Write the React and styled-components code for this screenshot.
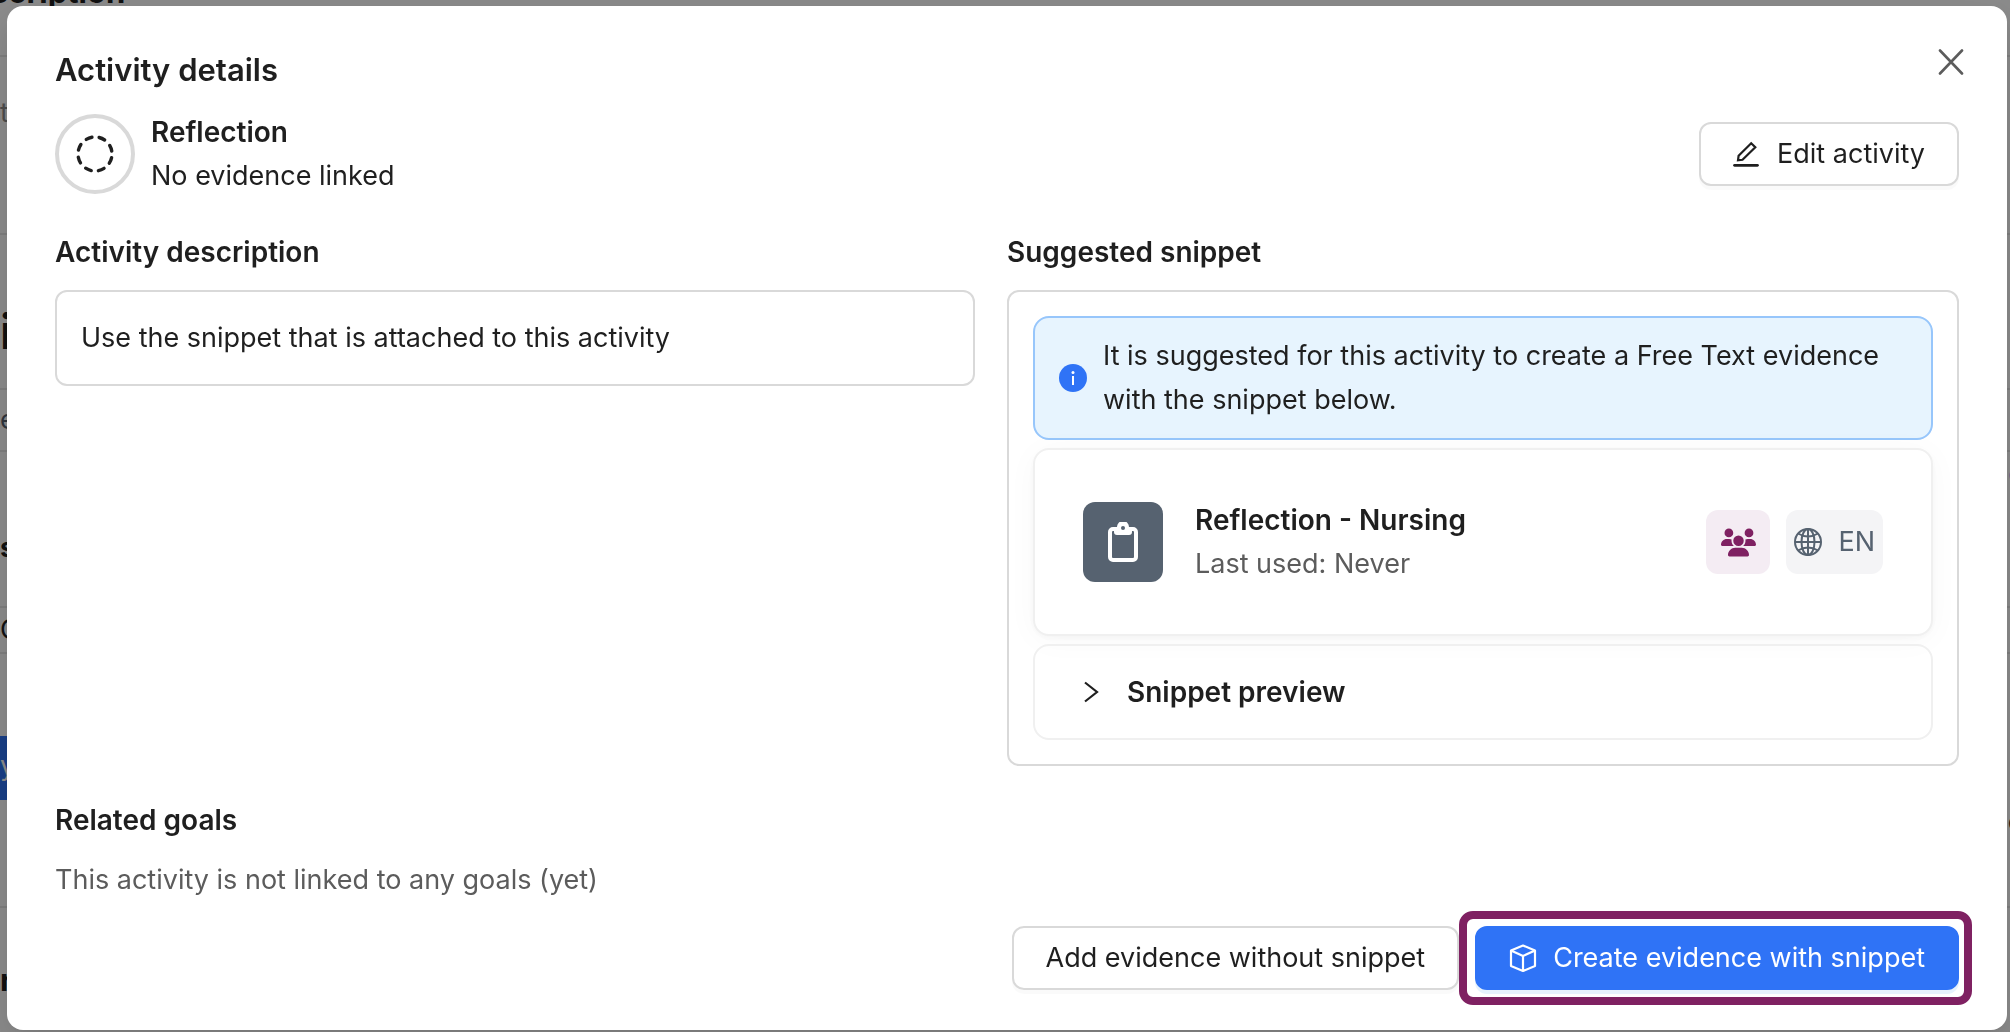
import React from 'react';
import styled, { createGlobalStyle } from 'styled-components';
import { FaUsers } from 'react-icons/fa6';

const GlobalStyle = createGlobalStyle`
  * {
    box-sizing: border-box;
  }

  body {
    margin: 0;
    background: #fff;
    color: #1f1f1f;
    font-family: Inter, 'Liberation Sans', sans-serif;
    font-size: 27px;
    line-height: 44px;
  }
`;

const Page = styled.div`
  position: fixed;
  inset: 0;
  overflow: hidden;
  background: #fff;
`;

const PageRow = styled.div`
  display: flex;
  align-items: flex-start;
  justify-content: space-between;
  height: ${(props) => props.$height}px;
  padding-top: ${(props) => props.$top || 0}px;
  border-bottom: 2px solid ${(props) => (props.$line ? '#e8e8e8' : 'transparent')};
  color: ${(props) => props.$color || '#1f1f1f'};
  font-size: ${(props) => props.$size || 27}px;
  font-weight: ${(props) => (props.$bold ? 700 : 400)};
`;

const PageTitle = styled.div`
  margin: -30px 0 0 -50px;
  font-size: 31px;
`;

const PageBlock = styled.div`
  width: 40px;
  height: 64px;
  line-height: 60px;
  color: #fff;
  background: #2f73f6;
`;

const PageEdge = styled.span`
  margin-right: -14px;
  color: ${(props) => props.$color};
  font-weight: 400;
`;

const Mask = styled.div`
  position: fixed;
  inset: 0;
  background: rgba(0, 0, 0, 0.45);
`;

const Modal = styled.div`
  position: relative;
  margin: 6px 3px 2px 7px;
  padding: 40px 48px;
  border-radius: 16px;
  background: #fff;
  box-shadow: 0 12px 32px 0 rgba(0, 0, 0, 0.08), 0 6px 12px -8px rgba(0, 0, 0, 0.12),
    0 18px 56px 16px rgba(0, 0, 0, 0.05);
`;

const ModalTitle = styled.h1`
  margin: 0 0 16px;
  font-size: 31px;
  font-weight: 600;
  line-height: 48px;
`;

const CloseButton = styled.button`
  position: absolute;
  top: 34px;
  right: 34px;
  display: flex;
  align-items: center;
  justify-content: center;
  width: 44px;
  height: 44px;
  padding: 0;
  border: 0;
  background: none;
  color: #5c5c5c;
`;

const Header = styled.div`
  display: flex;
  align-items: center;
  justify-content: space-between;
`;

const Summary = styled.div`
  display: flex;
  align-items: center;
  gap: 16px;
`;

const StatusRing = styled.div`
  display: flex;
  align-items: center;
  justify-content: center;
  width: 80px;
  height: 80px;
  border: 4px solid #d9d9d9;
  border-radius: 50%;
`;

const Name = styled.div`
  font-size: 28px;
  font-weight: 600;
`;

const Muted = styled.div`
  color: #5c5c5c;
`;

const Button = styled.button`
  position: relative;
  display: flex;
  align-items: center;
  gap: 16px;
  height: 64px;
  padding: 0 32px;
  border: 2px solid ${(props) => (props.$primary ? '#2f73f6' : '#d9d9d9')};
  border-radius: 12px;
  background: ${(props) => (props.$primary ? '#2f73f6' : '#fff')};
  color: ${(props) => (props.$primary ? '#fff' : '#1f1f1f')};
  box-shadow: 0 4px 0 ${(props) => (props.$primary ? '#e6f2fd' : 'rgba(0, 0, 0, 0.02)')};
  font: inherit;
`;

const Columns = styled.div`
  display: grid;
  grid-template-columns: 1fr 1fr;
  align-items: start;
  padding: 32px 0;
`;

const Column = styled.section`
  padding-right: ${(props) => (props.$gutter ? 32 : 0)}px;
`;

const Heading = styled.h2`
  margin: 0 0 16px;
  font-size: 28px;
  font-weight: 600;
  line-height: 44px;
`;

const Box = styled.div`
  display: flex;
  flex-direction: column;
  gap: 8px;
  padding: 24px;
  border: 2px solid #d9d9d9;
  border-radius: 12px;
`;

const Alert = styled.div`
  display: flex;
  align-items: center;
  gap: 16px;
  padding: 16px 24px;
  border: 2px solid #97c6fb;
  border-radius: 16px;
  background: #e7f4fe;

  svg {
    flex: none;
  }
`;

const SnippetCard = styled.div`
  display: flex;
  align-items: center;
  gap: 32px;
  padding: 48px;
  border: 2px solid #f0f0f0;
  border-radius: 16px;
  background: #fff;
  box-shadow: 0 2px 4px 0 rgba(0, 0, 0, 0.02), 0 2px 12px -2px rgba(0, 0, 0, 0.02),
    0 4px 32px 0 rgba(0, 0, 0, 0.03);
`;

const SnippetIcon = styled.div`
  display: flex;
  align-items: center;
  justify-content: center;
  width: 80px;
  height: 80px;
  border-radius: 12px;
  background: #566270;
`;

const Tags = styled.div`
  display: flex;
  gap: 16px;
  margin-left: auto;
`;

const Tag = styled.div`
  display: flex;
  align-items: center;
  justify-content: center;
  gap: 16px;
  min-width: 64px;
  height: 64px;
  padding: 0 8px;
  border-radius: 12px;
  background: ${(props) => (props.$shared ? '#f4ecf3' : '#f4f4f6')};
  color: ${(props) => (props.$shared ? '#7f2162' : '#566270')};
`;

const PreviewToggle = styled.button`
  display: flex;
  align-items: center;
  gap: 28px;
  padding: 24px 48px;
  border: 2px solid #f0f0f0;
  border-radius: 16px;
  background: none;
  color: inherit;
  font: inherit;
  font-size: 28px;
  font-weight: 600;
`;

const Footer = styled.div`
  display: flex;
  justify-content: flex-end;
  gap: 16px;
  margin-top: 24px;
`;

const Highlight = styled.span`
  position: absolute;
  inset: -17px -15px -17px -18px;
  border: 8px solid #7f2162;
  border-radius: 14px;
  pointer-events: none;
`;

const CloseIcon = () => (
  <svg width="26" height="26" viewBox="0 0 26 26" fill="none" stroke="currentColor" strokeWidth="2.600">
    <path d="M2 1.500 24 24.500M24 1.500 2 24.500" strokeLinecap="round" />
  </svg>
);

const DashedCircleIcon = () => (
  <svg width="40" height="40" viewBox="0 0 40 40" fill="none" stroke="#1f1f1f">
    <circle
      cx="20"
      cy="20"
      r="17"
      strokeWidth="3.400"
      strokeLinecap="round"
      strokeDasharray="6 7.350"
      strokeDashoffset="-3.700"
    />
  </svg>
);

const EditIcon = () => (
  <svg width="28" height="28" viewBox="0 0 28 28" fill="none" stroke="currentColor" strokeWidth="2.200">
    <path d="M18.200 3.300 22.300 7.300 9.500 19.800 5 20.300 5.600 15.800z" />
    <path d="M1.500 25.300h23" strokeWidth="2.700" strokeLinecap="round" />
  </svg>
);

const InfoIcon = () => (
  <svg width="28" height="28" viewBox="0 0 28 28">
    <circle cx="14" cy="14" r="14" fill="#2f73f6" />
    <circle cx="14" cy="8.500" r="1.500" fill="#fff" />
    <path d="M14 12v9" stroke="#fff" strokeWidth="2" />
  </svg>
);

const ClipboardIcon = () => (
  <svg width="30" height="40" viewBox="0 0 30 40" fill="none">
    <rect x="2" y="7" width="26" height="31" rx="3" stroke="#fff" strokeWidth="4" />
    <path
      d="M6 5h3a6 6 0 0 1 12 0h3v5a3 3 0 0 1-3 3H9a3 3 0 0 1-3-3z"
      fill="#fff"
    />
    <circle cx="15" cy="6" r="2" fill="#566270" />
  </svg>
);

const GlobeIcon = () => (
  <svg width="28" height="28" viewBox="0 0 28 28" fill="none" stroke="currentColor" strokeWidth="2">
    <circle cx="14" cy="14" r="13" />
    <ellipse cx="14" cy="14" rx="6.500" ry="13" />
    <path d="M14 1v26M1 14h26M4 5.500q10 6 20 0M4 22.500q10-6 20 0" />
  </svg>
);

const ChevronIcon = () => (
  <svg width="16" height="22" viewBox="0 0 16 22" fill="none" stroke="currentColor" strokeWidth="2.200">
    <path d="M2 1.500 14 11 2 20.500" />
  </svg>
);

const CubeIcon = () => (
  <svg
    width="28"
    height="28"
    viewBox="0 0 28 28"
    fill="none"
    stroke="currentColor"
    strokeWidth="2.200"
    strokeLinejoin="round"
  >
    <path d="M14 1.500 26 6.500V22L14 27 2 22V6.500zM2 6.500l12 5.500 12-5.500M14 12v15" />
  </svg>
);

const App = () => (
  <>
    <GlobalStyle />

    <Page aria-hidden="true">
      <PageRow $height={57} $line $bold>
        <PageTitle>Description</PageTitle>
      </PageRow>
      <PageRow $height={178} $line $top={34} $color="#8c8c8c">te</PageRow>
      <PageRow $height={155} $line $top={75} $bold $size={48}>i</PageRow>
      <PageRow $height={62} $line $top={8} $color="#566270">e</PageRow>
      <PageRow $height={156} $line $bold>
        <PageRow as="span" $top={74} $bold>s</PageRow>
        <PageEdge $color="#2f73f6">e</PageEdge>
      </PageRow>
      <PageRow $height={46} $line>G</PageRow>
      <PageRow $height={82} />
      <PageRow $height={64}>
        <PageBlock>y</PageBlock>
      </PageRow>
      <PageRow $height={108} $line>
        <span />
        <PageEdge $color="#1f1f1f">o</PageEdge>
      </PageRow>
      <PageRow $height={160} $top={50} $bold $size={31}>r</PageRow>
    </Page>
    <Mask />

    <Modal role="dialog" aria-labelledby="modal-title">
      <ModalTitle id="modal-title">Activity details</ModalTitle>
      <CloseButton aria-label="Close">
        <CloseIcon />
      </CloseButton>

      <Header>
        <Summary>
          <StatusRing>
            <DashedCircleIcon />
          </StatusRing>
          <div>
            <Name>Reflection</Name>
            <div>No evidence linked</div>
          </div>
        </Summary>
        <Button>
          <EditIcon />
          Edit activity
        </Button>
      </Header>

      <Columns>
        <Column $gutter>
          <Heading>Activity description</Heading>
          <Box>Use the snippet that is attached to this activity</Box>
        </Column>

        <Column>
          <Heading>Suggested snippet</Heading>
          <Box>
            <Alert>
              <InfoIcon />
              <div>
                It is suggested for this activity to create a Free Text evidence with the snippet
                below.
              </div>
            </Alert>
            <SnippetCard>
              <SnippetIcon>
                <ClipboardIcon />
              </SnippetIcon>
              <div>
                <Name>Reflection - Nursing</Name>
                <Muted>Last used: Never</Muted>
              </div>
              <Tags>
                <Tag $shared>
                  <FaUsers size={35} />
                </Tag>
                <Tag>
                  <GlobeIcon />
                  EN
                </Tag>
              </Tags>
            </SnippetCard>
            <PreviewToggle aria-expanded="false">
              <ChevronIcon />
              Snippet preview
            </PreviewToggle>
          </Box>
        </Column>
      </Columns>

      <Heading>Related goals</Heading>
      <Muted>This activity is not linked to any goals (yet)</Muted>

      <Footer>
        <Button>Add evidence without snippet</Button>
        <Button $primary>
          <CubeIcon />
          Create evidence with snippet
          <Highlight />
        </Button>
      </Footer>
    </Modal>
  </>
);

export default App;
